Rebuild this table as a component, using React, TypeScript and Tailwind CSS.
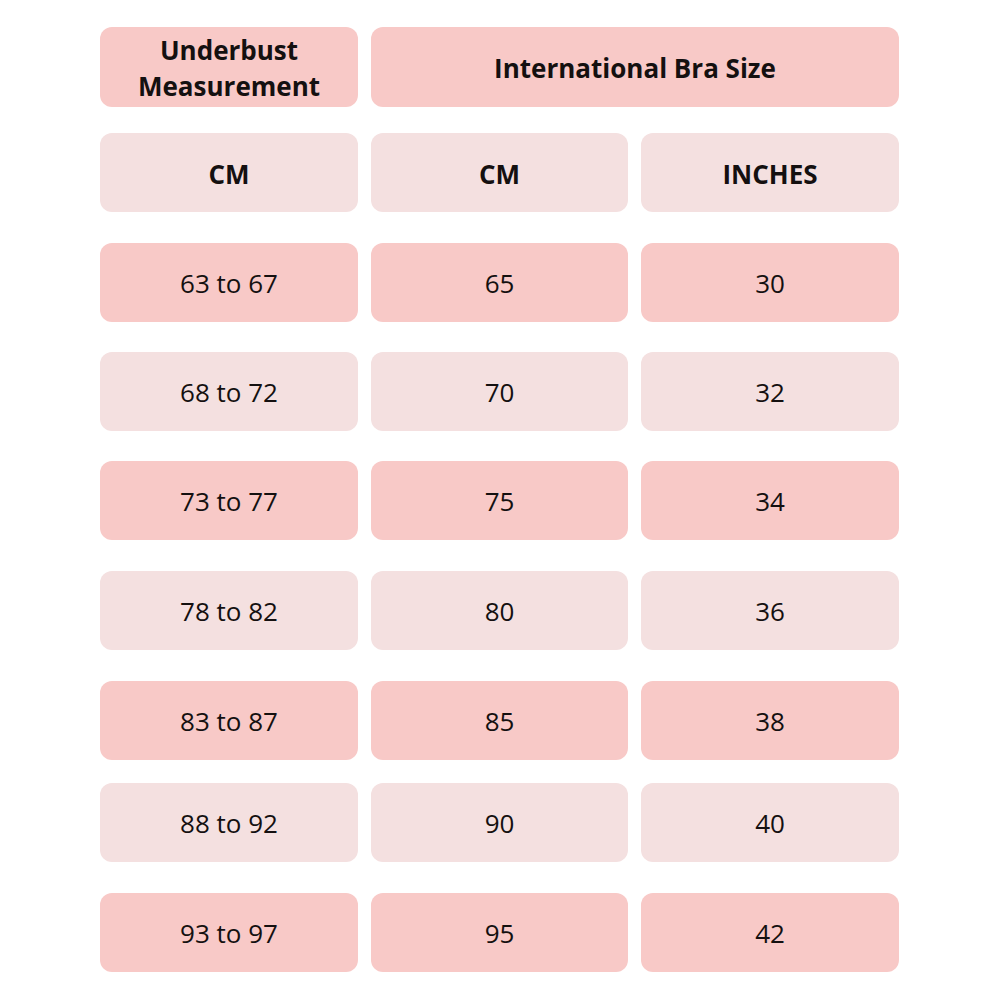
import React from "react";

const dark = "bg-[#f8c9c7]";
const light = "bg-[#f4e0e0]";

const rows: { a: string; b: string; c: string; mt: string }[] = [
  { a: "63 to 67", b: "65", c: "30", mt: "mt-[31px]" },
  { a: "68 to 72", b: "70", c: "32", mt: "mt-[30px]" },
  { a: "73 to 77", b: "75", c: "34", mt: "mt-[30px]" },
  { a: "78 to 82", b: "80", c: "36", mt: "mt-[31px]" },
  { a: "83 to 87", b: "85", c: "38", mt: "mt-[31px]" },
  { a: "88 to 92", b: "90", c: "40", mt: "mt-[23px]" },
  { a: "93 to 97", b: "95", c: "42", mt: "mt-[31px]" },
];

function Cell({ children, bg, bold }: { children: React.ReactNode; bg: string; bold?: boolean }) {
  return (
    <div
      className={`${bg} rounded-[12px] flex items-center justify-center text-center text-[#141010] text-[26px] leading-[36px] ${bold ? "font-bold pt-[2px]" : "font-normal"}`}
    >
      {children}
    </div>
  );
}

export default function App() {
  return (
    <div
      className="w-[1000px] h-[1000px] bg-white pt-[27px] pl-[100px]"
      style={{ fontFamily: '"Open Sans", "Noto Sans", sans-serif' }}
    >
      <div className="w-[799px] flex flex-col">
        <div className="grid grid-cols-[258px_1fr] gap-x-[13px] h-[80px]">
          <Cell bg={dark} bold>
            Underbust
            <br />
            Measurement
          </Cell>
          <Cell bg={dark} bold>
            International Bra Size
          </Cell>
        </div>
        <div className="grid grid-cols-[258px_257px_258px] gap-x-[13px] h-[79px] mt-[26px]">
          <Cell bg={light} bold>CM</Cell>
          <Cell bg={light} bold>CM</Cell>
          <Cell bg={light} bold>INCHES</Cell>
        </div>
        {rows.map((r, i) => (
          <div key={i} className={`grid grid-cols-[258px_257px_258px] gap-x-[13px] h-[79px] ${r.mt}`}>
            <Cell bg={i % 2 === 0 ? dark : light}>{r.a}</Cell>
            <Cell bg={i % 2 === 0 ? dark : light}>{r.b}</Cell>
            <Cell bg={i % 2 === 0 ? dark : light}>{r.c}</Cell>
          </div>
        ))}
      </div>
    </div>
  );
}
